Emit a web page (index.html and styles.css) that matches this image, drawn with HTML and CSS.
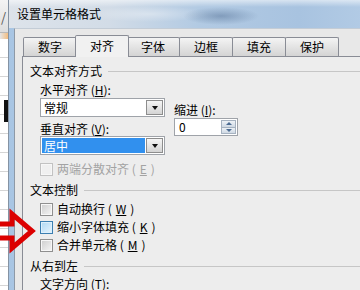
FILE: index.html
```html
<!DOCTYPE html>
<html lang="zh-CN">
<head>
    <meta charset="UTF-8">
    <title>设置单元格格式</title>
    <link rel="stylesheet" href="styles.css">
</head>
<body>
    <div class="screen">
        <div class="sheet">
            <div class="sheet-head"><span class="sheet-glyph">/</span></div>
            <div class="sheet-sel"></div>
            <div class="sheet-rows"><div class="sheet-mark"></div></div>
        </div>
        <div class="dialog">
            <div class="titlebar">设置单元格格式</div>
            <div class="frame">
                <div class="client">
                    <div class="tabs">
                        <div class="tab">数字</div>
                        <div class="tab active">对齐</div>
                        <div class="tab">字体</div>
                        <div class="tab">边框</div>
                        <div class="tab">填充</div>
                        <div class="tab">保护</div>
                    </div>
                    <div class="panel">
                        <div class="group-title"><span>文本对齐方式</span></div>
                        <div class="fields">
                            <div class="col-left">
                                <div class="label first">水平对齐 (<u>H</u>):</div>
                                <div class="combo combo-first">
                                    <span class="combo-text">常规</span>
                                    <span class="combo-btn"></span>
                                </div>
                                <div class="label">垂直对齐 (<u>V</u>):</div>
                                <div class="combo">
                                    <span class="combo-text selected">居中</span>
                                    <span class="combo-btn"></span>
                                </div>
                                <div class="check inline disabled"><span class="box"></span>两端分散对齐 (<u>E</u>)</div>
                            </div>
                            <div class="col-right">
                                <div class="label">缩进 (<u>I</u>):</div>
                                <div class="spin">
                                    <span class="spin-text">0</span>
                                    <span class="spin-btns"><i class="spin-up"></i><i class="spin-down"></i></span>
                                </div>
                            </div>
                        </div>
                        <div class="group-title group-gap"><span>文本控制</span></div>
                        <div class="check check-first"><span class="box"></span>自动换行 (<u>W</u>)</div>
                        <div class="check"><span class="box hover"></span>缩小字体填充 (<u>K</u>)</div>
                        <div class="check"><span class="box"></span>合并单元格 (<u>M</u>)</div>
                        <div class="group-title group-gap"><span>从右到左</span></div>
                        <div class="label sub">文字方向 (<u>T</u>):</div>
                    </div>
                </div>
            </div>
        </div>
        <svg class="arrow" width="40" height="50" viewBox="0 0 40 50">
            <polygon points="-5,19 12,19 12,9 32,26 12,43 12,33 -5,33" fill="none" stroke="#dc0000" stroke-width="5"/>
        </svg>
    </div>
</body>
</html>
```

FILE: styles.css
```css
body {
    margin: 0;
    width: 360px;
    height: 290px;
    overflow: hidden;
    font-family: "Noto Sans CJK SC", "Noto Sans", sans-serif;
    font-size: 12px;
    color: #000;
    background: #fff;
}
.screen {
    position: relative;
    display: flex;
    width: 360px;
    height: 290px;
    overflow: hidden;
}

/* excel sheet peeking out on the left */
.sheet {
    flex: 0 0 8px;
    display: flex;
    flex-direction: column;
    background: #fff;
}
.sheet-head {
    height: 32px;
    background: linear-gradient(#f4f4f4, #dedede);
    border-bottom: 1px solid #b9b9b9;
    line-height: 34px;
    font-size: 13px;
    color: #555;
    padding-left: 1px;
    overflow: hidden;
}
.sheet-sel {
    height: 6px;
    background: linear-gradient(90deg, #e6e6e6, #f3bd80);
}
.sheet-rows {
    flex: 1;
    background: repeating-linear-gradient(#fff 0 18px, #d5d5d5 18px 19px);
}
.sheet-mark {
    width: 4px;
    height: 22px;
    margin: 61px 0 0 auto;
    background: #111;
}

/* dialog */
.dialog {
    flex: 0 0 380px;
    display: flex;
    flex-direction: column;
    border-left: 1px solid #8593a3;
}
.titlebar {
    height: 28px;
    line-height: 28px;
    padding-left: 8px;
    font-size: 12px;
    background:
        radial-gradient(ellipse 38px 9px at 212px 16px, rgba(60, 90, 130, .4), transparent),
        radial-gradient(ellipse 60px 8px at 140px 14px, rgba(255, 255, 255, .35), transparent),
        linear-gradient(180deg, rgba(255, 255, 255, .55) 0, rgba(255, 255, 255, 0) 7px),
        linear-gradient(90deg, #dde3ea 0, #d2dce7 100px, #b2cae3 190px, #a8c3e0 290px, #b6cee7 100%);
}
.frame {
    flex: 1;
    display: flex;
    padding-left: 5px;
    background: linear-gradient(90deg, #a8c5e3, #cadcf0);
}
.client {
    flex: 1;
    display: flex;
    flex-direction: column;
    background: #e8e8e8;
    border-left: 1px solid #8d99a7;
    border-top: 1px solid #c3ccd6;
    padding: 6px 0 0 7px;
}

/* tabs */
.tabs {
    display: flex;
    align-items: flex-end;
    height: 21px;
    padding-left: 1px;
}
.tab {
    width: 54px;
    height: 19px;
    box-sizing: border-box;
    border: 1px solid #898c95;
    border-bottom: 0;
    border-radius: 2px 2px 0 0;
    background: linear-gradient(#f4f4f4, #e5e5e5 45%, #d4d4d4);
    text-align: center;
    line-height: 18px;
}
.tab + .tab { margin-left: -1px; }
.tab.active {
    height: 22px;
    margin: 0 -2px -1px;
    line-height: 20px;
    background: #f1f1f1;
    position: relative;
    z-index: 1;
}
.panel {
    flex: 1;
    border: 1px solid #898c95;
    background: #ededed;
    padding: 7px 0 0 7px;
    line-height: 14px;
}

/* groups */
.group-title {
    display: flex;
    align-items: center;
    height: 14px;
}
.group-title::after {
    content: "";
    flex: 1;
    height: 1px;
    margin-left: 6px;
    background: #c6c6c6;
}
.group-gap { margin-top: 5px; }
.fields {
    display: flex;
    gap: 9px;
    padding-left: 10px;
}
.col-left {
    width: 125px;
    display: flex;
    flex-direction: column;
}
.col-right {
    display: flex;
    flex-direction: column;
    padding-top: 25px;
}
.label { margin-top: 5px; height: 14px; white-space: nowrap; }
.col-right .label { margin-top: 0; }
.label.sub { padding-left: 10px; margin-top: 4px; }

/* combo boxes */
.combo {
    display: flex;
    height: 19px;
    box-sizing: border-box;
    border: 1px solid #9fa3a9;
    background: #fff;
    padding: 1px;
}
.combo-first { margin-top: 1px; }
.combo-text {
    flex: 1;
    padding-left: 2px;
    line-height: 15px;
}
.combo-text.selected {
    background: #3190ee;
    color: #fff;
    margin-right: 1px;
}
.combo-btn {
    width: 15px;
    border: 1px solid #8d8d8d;
    background: linear-gradient(#f5f5f5, #d4d4d4);
    display: flex;
    align-items: center;
    justify-content: center;
}
.combo-btn::after {
    content: "";
    border-top: 4px solid #111;
    border-left: 3.5px solid transparent;
    border-right: 3.5px solid transparent;
}

/* spin box */
.spin {
    display: flex;
    width: 64px;
    height: 18px;
    box-sizing: border-box;
    margin-top: 1px;
    border: 1px solid #9fa3a9;
    background: #fff;
    padding: 1px;
}
.spin-text { flex: 1; padding-left: 3px; line-height: 14px; }
.spin-btns {
    width: 15px;
    display: flex;
    flex-direction: column;
}
.spin-btns i {
    flex: 1;
    display: flex;
    align-items: center;
    justify-content: center;
    border: 1px solid #a6b2c0;
    background: linear-gradient(#eef2f6, #cfd9e4);
}
.spin-btns i + i { border-top: 0; }
.spin-up::after {
    content: "";
    border-bottom: 3px solid #4b6b92;
    border-left: 3px solid transparent;
    border-right: 3px solid transparent;
}
.spin-down::after {
    content: "";
    border-top: 3px solid #4b6b92;
    border-left: 3px solid transparent;
    border-right: 3px solid transparent;
}

/* checkboxes */
.check {
    display: flex;
    align-items: center;
    gap: 4px;
    height: 18px;
    padding-left: 10px;
    white-space: nowrap;
}
.check.inline { padding-left: 0; margin-top: 5px; }
.check-first { margin-top: 3px; }
.box {
    width: 13px;
    height: 13px;
    box-sizing: border-box;
    border: 1px solid #8f8f8f;
    background: linear-gradient(135deg, #cdcdcd, #f6f6f6);
    box-shadow: inset 0 0 0 1px #f7f7f7;
}
.box.hover {
    border-color: #3c7fb1;
    background: linear-gradient(135deg, #aed8f4, #e6f4fd);
    box-shadow: inset 0 0 0 1px #def0fc;
}
.check.disabled { color: #a3a3a3; }
.check.disabled .box {
    border-color: #c2c2c2;
    background: #f0f0f0;
}

/* red annotation arrow */
.arrow {
    position: absolute;
    left: 0;
    top: 205px;
}
```
